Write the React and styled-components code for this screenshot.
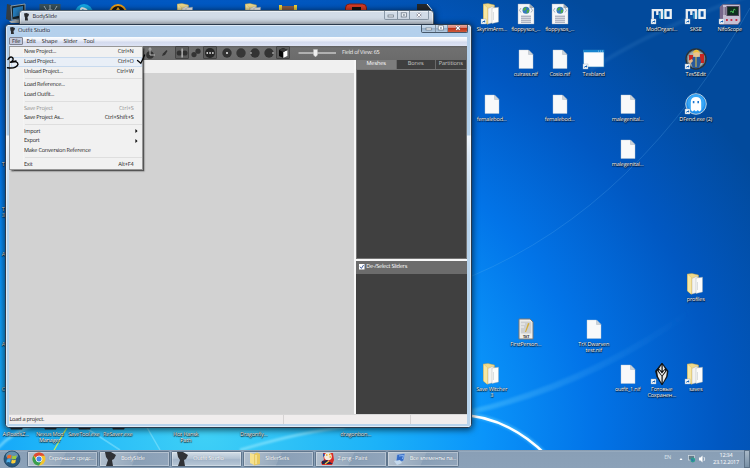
import React from "react";
import styled, { createGlobalStyle, css } from "styled-components";

const Global = createGlobalStyle`
  * { box-sizing: border-box; }
  body { margin: 0; overflow: hidden; }
  body, button { font-family: "Open Sans", "Noto Sans", sans-serif; font-size: 5.6px; letter-spacing: -0.25px; text-rendering: geometricPrecision; }
`;

const Screen = styled.div`
  position: relative;
  width: 750px;
  height: 468px;
  overflow: hidden;
  display: flex;
  flex-direction: column;
  color: #1c1c1c;
  line-height: 1;
  background: radial-gradient(ellipse 635px 535px at 205px 435px, #3fd0f6 0%, #1cb2f8 27%, #0a94fa 44%, #0274e8 61%, #0158c2 81%, #024a9c 100%);
`;
const Wallpaper = styled.svg`
  position: absolute;
  inset: 0;
`;
const IconGrid = styled.div`
  position: relative;
  flex: 1;
  min-height: 0;
  margin-left: -1.3px;
  display: grid;
  grid-template-columns: repeat(22, 34px);
  grid-template-rows: repeat(10, 45px);
`;
const Shortcut = styled.div`
  grid-column: ${(p) => p.$col + 1};
  grid-row: ${(p) => p.$row + 1};
  display: flex;
  flex-direction: column;
  align-items: ${(p) => (p.$edge ? "flex-start" : "center")};
  padding-top: 2.5px;
  padding-left: ${(p) => (p.$edge ? 3 : 0)}px;
  svg { display: block; flex: none; overflow: visible; }
`;
const Label = styled.div`
  margin-top: 1.2px;
  color: #fff;
  font-size: 5.5px;
  line-height: 6.6px;
  text-align: center;
  white-space: pre;
  letter-spacing: -0.17px;
  text-shadow: 0 0.4px 1px #000, 0.4px 0.6px 1px #000;
`;

/* windows */
const Window = styled.section`
  position: absolute;
  left: ${(p) => p.$x}px;
  top: ${(p) => p.$y}px;
  width: ${(p) => p.$w}px;
  height: ${(p) => p.$h}px;
  display: flex;
  flex-direction: column;
  padding: 0 3.5px 3.5px;
  border: 1px solid ${(p) => (p.$active ? "#2b3a4c" : "#52616f")};
  border-radius: 3.5px;
  background: ${(p) => (p.$active
    ? "linear-gradient(#b4d0ec 0, #b0cfeb 110px, #eef5fb 111px, #dce9f6 130px, #b7d3ec 200px)"
    : "linear-gradient(#d2dce8, #c6d3e2)")};
  box-shadow: inset 0 0 0 0.7px rgba(255, 255, 255, 0.75), 0 1px 6px 1px rgba(0, 0, 0, 0.6);
`;
const TitleBar = styled.header`
  flex: none;
  height: 12px;
  display: flex;
  align-items: flex-start;
  padding-left: ${(p) => p.$inset}px;
`;
const Title = styled.span`
  flex: 1;
  margin-left: 3.6px;
  padding-top: 3.2px;
  letter-spacing: -0.1px;
  color: #18202c;
  text-shadow: 0 0 3px #fff;
`;
const Mark = styled.svg`
  flex: none;
  width: 5px;
  height: 7.5px;
  margin-top: 2.1px;
`;
const Controls = styled.div`
  display: flex;
  height: 8.6px;
  margin-right: ${(p) => p.$right}px;
  border: 0.7px solid ${(p) => (p.$active ? "#47596b" : "#8b9aa9")};
  border-top: 0;
  border-radius: 0 0 2px 2px;
  overflow: hidden;
`;
const Control = styled.button`
  width: ${(p) => p.$w}px;
  padding: 0;
  border: 0;
  border-left: ${(p) => (p.$first ? 0 : "0.7px solid #8494a4")};
  display: grid;
  place-items: center;
  background: ${(p) => (p.$close
    ? "linear-gradient(#e7a89c, #d77967 45%, #bb3319 50%, #cf5a3c)"
    : p.$active ? "linear-gradient(#cbddee, #bacee2 45%, #98b1ca 50%, #b3cbe2)" : "transparent")};
`;
const Client = styled.div`
  flex: 1;
  min-height: 0;
  display: flex;
  flex-direction: column;
  background: #f0f0f0;
`;
const MenuBar = styled.nav`
  flex: none;
  height: 9px;
  display: flex;
  align-items: center;
  background: linear-gradient(#fdfeff, #e7ebf6 45%, #d3daee 55%, #dde3f4);
`;
const MenuTitle = styled.span`
  height: 7.6px;
  line-height: 6.4px;
  padding: 0 2px;
  letter-spacing: -0.12px;
  border: 1px solid ${(p) => (p.$open ? "#7e8290" : "transparent")};
  border-radius: 1px;
  background: ${(p) => (p.$open ? "#c4c9db" : "transparent")};
`;
const Toolbar = styled.div`
  flex: none;
  height: 14px;
  display: flex;
  align-items: center;
  padding-left: 133.5px;
  background: linear-gradient(#5e5e5e, #707070 2px, #6b6b6b);
  color: #fff;
`;
const Tool = styled.span`
  width: 14px;
  height: 13px;
  display: grid;
  place-items: center;
  margin-right: ${(p) => p.$gap || 0}px;
  ${(p) => p.$on && css`
    border: 0.8px solid #444;
    background: #5c5c5c;
    border-radius: 1px;
  `}
`;
const Slider = styled.svg`
  margin-left: 8px;
`;
const FieldOfView = styled.span`
  margin-left: 5.5px;
  letter-spacing: -0.26px;
  color: #f0f0f0;
`;
const Workspace = styled.div`
  flex: 1;
  min-height: 0;
  display: grid;
  grid-template-columns: 1fr 110.6px;
  column-gap: 1.5px;
  background: #f8f8f8;
`;
const Viewport = styled.div`
  margin: 13px 0.6px 0 0;
  background: #d2d2d2;
  box-shadow: 0 -13px 0 #f0f0f0;
`;
const SidePanels = styled.div`
  display: flex;
  flex-direction: column;
`;
const Tabs = styled.div`
  display: grid;
  grid-template-columns: 39.5px 38px 1fr;
  column-gap: 0.8px;
  height: 9px;
  padding-right: 1px;
  background: #6a6a6a;
`;
const Tab = styled.span`
  display: grid;
  place-items: center;
  letter-spacing: -0.1px;
  color: ${(p) => (p.$on ? "#fff" : "#c9c9c9")};
  background: ${(p) => (p.$on ? "#7d7d7d" : "#3f3f3f")};
`;
const MeshList = styled.div`
  height: 190.5px;
  border: 1px solid #747474;
  background: #404040;
`;
const SliderHeader = styled.label`
  height: 13px;
  margin-top: 1.7px;
  display: flex;
  align-items: center;
  gap: 1.5px;
  padding-left: 2.8px;
  background: #6c6c6c;
  color: #fff;
`;
const SliderList = styled.div`
  flex: 1;
  background: #404040;
`;
const StatusBar = styled.footer`
  flex: none;
  height: 10px;
  display: grid;
  grid-template-columns: 275px 127px 1fr;
  align-items: center;
  background: #f0eded;
  border-top: 0.6px solid #d7d7d7;
`;
const StatusCell = styled.span`
  height: 9px;
  line-height: 9.5px;
  padding-left: 0.4px;
  border-right: 0.7px solid #d6d3d3;
  &:last-child { border-right: 0; }
`;

/* open File menu */
const Menu = styled.div`
  position: absolute;
  left: 9px;
  top: 45.5px;
  width: 134.3px;
  height: 124.2px;
  padding: 0.8px;
  background: linear-gradient(90deg, #f1f1f1 13px, #e2e3e3 13px, #fff 13.8px, #f1f1f1 14.5px);
  border: 0.8px solid #979797;
  box-shadow: 1.5px 1.5px 1.5px rgba(0, 0, 0, 0.6);
`;
const MenuItem = styled.div`
  height: 9.87px;
  display: flex;
  align-items: center;
  justify-content: space-between;
  padding: 0 7.8px 0 13.2px;
  border-radius: 1px;
  color: ${(p) => (p.$disabled ? "#929292" : "#1a1a1a")};
  ${(p) => p.$hover && css`
    background: #e9eff7;
    box-shadow: inset 0 0 0 0.7px #bdd3ec;
  `}
`;
const Shortkey = styled.span`
  letter-spacing: -0.12px;
`;
const Separator = styled.div`
  height: 3.4px;
  margin-left: 14px;
  padding-top: 1.3px;
  &::before { content: ""; display: block; height: 0.8px; background: #dedede; }
`;
const Submenu = styled.svg`
  margin-right: -4.6px;
`;
const Scribble = styled.svg`
  position: absolute;
  left: 0;
  top: 46px;
  pointer-events: none;
`;

/* taskbar */
const Taskbar = styled.footer`
  position: relative;
  flex: none;
  height: 18px;
  display: flex;
  align-items: stretch;
  padding-left: 3px;
  background: linear-gradient(#71879f 0, #a2b4c6 1px, #899fb6 2px, #8ba1b8);
  color: #fff;
`;
const Start = styled.svg`
  flex: none;
  width: 18px;
  height: 18px;
  margin-right: 5.5px;
`;
const Task = styled.div`
  width: 71.4px;
  margin: 0.7px 0.8px 0.6px 0;
  padding-left: 4.4px;
  display: flex;
  align-items: center;
  gap: 2.8px;
  border: 0.7px solid #60768d;
  border-radius: 1.4px;
  white-space: nowrap;
  box-shadow: inset 0 0 0 0.7px rgba(255, 255, 255, 0.45);
  background: ${(p) => (p.$active
    ? "linear-gradient(#d2dde7, #b4c4d4 45%, #a4b6ca 55%, #b8c8d7)"
    : "linear-gradient(115deg, #b3c1cf, #96a9bd 50%, #899fb6 51%, #91a5bb)")};
  span { text-shadow: 0 0 1px rgba(40, 60, 80, 0.5); letter-spacing: -0.2px; }
`;
const Tray = styled.div`
  margin-left: auto;
  display: flex;
  align-items: center;
`;
const Language = styled.span`
  margin-right: 7px;
  padding-bottom: 2px;
  color: #dce5ed;
`;
const Clock = styled.span`
  width: 36px;
  margin-left: 2px;
  text-align: center;
  line-height: 7.4px;
`;
const ShowDesktop = styled.span`
  align-self: stretch;
  width: 6px;
  border: 0.7px solid #5d7287;
  background: linear-gradient(#a9b9c8, #7890a6);
`;

const Logo = () => (
  <Mark viewBox="0 0 10 15">
    <path d="M0 1 5 0 10 2 9 6 7 8 8 15 2 15 2 9 1 7Z" fill="#2a2c30" />
  </Mark>
);

const Arrow = () => (
  <g transform="translate(0 16)">
    <rect width="5" height="5" fill="#f5f9fc" stroke="#97a9bc" strokeWidth=".4" />
    <path d="M1 4C1 2.5 2 2 3 2V1L4.4 2.4 3 3.8V3Q2 2.8 1 4" fill="#1763b6" />
  </g>
);

const drawings = {
  file: () => (
    <>
      <path d="M4 2H13.5L18 6.5V20.5H4Z" fill="#f8f9fa" stroke="#bac7d2" strokeWidth=".4" />
      <path d="M13.5 2V6.5H18Z" fill="#cbd3da" stroke="#8d9aa6" strokeWidth=".3" />
    </>
  ),
  folder: () => (
    <>
      <path d="M2.5 1 7 .5 13.5 2V18L6 21 2.5 18Z" fill="#f0da8b" stroke="#c59f3b" strokeWidth=".4" />
      <path d="M7 5.5 12.5 3V19.5L7 21Z" fill="#f3f3f1" stroke="#a8a8a0" strokeWidth=".4" />
      <path d="M11 5 17.5 4.2V19L11 20.5Z" fill="#fcfcfb" stroke="#a3a8a8" strokeWidth=".4" />
      <path d="M12.5 9V17" stroke="#c5c9cc" strokeWidth=".6" />
      <path d="M2.5 1 6.5 4.5V21.5L2.5 18Z" fill="#f7e7a2" stroke="#cfae55" strokeWidth=".3" />
    </>
  ),
  web: () => (
    <>
      <path d="M3 1H14.5L19 5V21H3Z" fill="#f5f6f8" stroke="#9fa9b3" strokeWidth=".4" />
      <path d="M14.5 1V5H19Z" fill="#9ba5b0" />
      <path d="M6 5 4.5 7.3 6 9.5M16 5 17.5 7.3 16 9.5" fill="none" stroke="#8293a5" strokeWidth=".7" />
      <circle cx="11" cy="7.3" r="3.5" fill="#3679bf" />
      <path d="M8 6.5Q9 4 11.5 4L11 6.5 9 8Z M12 7 14.3 6.5 13.5 9.5 11.5 10.5Z" fill="#52ae42" />
      <path d="M6 13.2H16M6 15.2H16M6 17.2H16M6 19.2H16" stroke="#9197aa" strokeWidth="1" />
    </>
  ),
  window: () => (
    <>
      <rect x=".5" y="2" width="20.5" height="17" fill="#fbfcfd" stroke="#1e79bd" strokeWidth=".6" />
      <path d="M.5 2H21V4.3H.5Z" fill="#1684cf" />
      <path d="M15 3.1H16M17 3.1H18M19 3.1H20" stroke="#d9effc" strokeWidth=".6" />
    </>
  ),
  mo: () => (
    <>
      <path d="M1.8 16V7.2H10.8V16M6.3 7V12" fill="none" stroke="#e8edf1" strokeWidth="2.3" />
      <path d="M8.8 10V15.5M13 7V15.5" stroke="#2b9ac6" strokeWidth="1.3" />
      <path d="M14.5 7.2H19.7V14.8H14.5Z" fill="none" stroke="#eff2f4" strokeWidth="2.3" />
    </>
  ),
  scope: () => (
    <>
      <path d="M1 4 4 1.5H21L21.5 18 19 21.5H1Z" fill="#c6bfd2" stroke="#665b76" strokeWidth=".7" />
      <path d="M1 4 4 1.5V18L1 21Z" fill="#78688c" />
      <rect x="8" y="3.5" width="11.5" height="9" fill="#102d20" stroke="#4d4358" strokeWidth="1" />
      <path d="M11 9 13 8 14 10 15 6 16.5 7" fill="none" stroke="#55d75e" strokeWidth=".8" />
      <path d="M7 17H8.8M11.5 17H13.3M16.5 17H18.3" stroke="#c12e47" strokeWidth="2" />
      <path d="M5 4V12M6.5 4V12" stroke="#48375b" strokeWidth=".6" />
    </>
  ),
  vault: () => (
    <>
      <circle cx="11" cy="11" r="10" fill="#73828a" stroke="#2a3339" strokeWidth="1.4" />
      <circle cx="11" cy="11" r="8" fill="#a8b2ac" />
      <path d="M4 7H8V14H4ZM15 6H19V15H15Z" fill="#c92621" />
      <path d="M8 9H15L16 14 14 20H8L6 15Z" fill="#28599b" />
      <path d="M11 9V19" stroke="#e4c33d" strokeWidth="1" />
      <circle cx="11.5" cy="5.8" r="3.2" fill="#eac38d" />
      <path d="M8 5Q9 1 13 2L15 5 12 4Z" fill="#ecc23d" />
      <path d="M3 13 7 11 8 13 5 16Z" fill="#e5b887" />
    </>
  ),
  ghost: () => (
    <>
      <circle cx="11" cy="11" r="10.3" fill="#2191ef" stroke="#b8cfde" strokeWidth="1" />
      <circle cx="11" cy="10" r="8.5" fill="#38a7f7" />
      <path d="M5.8 17V9Q6 4 11 4T16.2 9V17L14.5 18.5 12.7 17 11 18.5 9.3 17 7.5 18.5Z" fill="#fff" />
      <path d="M8.6 8V10.3M13.2 8V10.3" stroke="#1d78cf" strokeWidth="1.6" />
    </>
  ),
  text: () => (
    <>
      <path d="M4 1H15L18 4V21H4Z" fill="#eeeeec" stroke="#777" strokeWidth="1" />
      <rect x="5.8" y="3.5" width="10.5" height="12" fill="#cecfd0" />
      <path d="M10 14 13 5 14.5 5.5 11 14Z" fill="#d5ad38" />
      <path d="M6 6H10M6 9H9" stroke="#f5f5f5" strokeWidth="1" />
      <text x="11" y="19.6" fontSize="3.8" fontWeight="700" textAnchor="middle" fill="#222">TXT</text>
    </>
  ),
  skyrim: () => (
    <>
      <path d="M11 0 17 8 16 14 11 22 6 14 4.5 8Z" fill="#111" stroke="#111" strokeWidth=".8" />
      <path d="M10.5 2V8L8 5.8ZM11.7 2 14 5.8 11.7 8ZM6 7.5 10.5 13V20L7 13.5ZM16 7.5 11.7 13V20L15.2 13.5Z" fill="#e9e9e7" />
      <path d="M8 7.5 11 11.5 14 7.5" fill="none" stroke="#fff" strokeWidth="1.1" />
    </>
  ),
  computer: () => (
    <>
      <path d="M2 1 6 2V18L1 16Z" fill="#333d45" />
      <path d="M6 3 20 1V15L7 17Z" fill="#182730" stroke="#8b9ba5" strokeWidth="1" />
      <path d="M8 5 18 3V12L8 14Z" fill="#277fbf" />
      <path d="M4 18 18 16 20 20H6Z" fill="#bac3c8" />
    </>
  ),
  emblem: () => (
    <>
      <rect x=".5" y="1" width="21" height="20" fill="#38515c" />
      <path d="M11 2V12M5 3 8 8 11 6 15 8 18 3" fill="none" stroke="#a5b5ba" strokeWidth="1" />
    </>
  ),
  skype: () => (
    <>
      <circle cx="11" cy="10" r="9" fill="#14a9e6" />
      <path d="M14 7Q7 3 8 8 15 10 14 13 10 16 7 12" fill="none" stroke="#fff" strokeWidth="2" />
    </>
  ),
  orange: () => (
    <>
      <circle cx="11" cy="10" r="8" fill="#191713" stroke="#ec9e17" strokeWidth="2" />
      <path d="M11 4 15 10H7Z" fill="#f2a921" />
    </>
  ),
  scroll: () => (
    <>
      <path d="M4 3H18V15H4Z" fill="#8c5e45" />
      <path d="M2 2H5V16H2ZM17 2H20V16H17Z" fill="#efd338" />
    </>
  ),
  red: () => (
    <>
      <rect x=".5" y="1" width="21" height="18" rx="4" fill="#d93c24" stroke="#7c1d16" />
      <path d="M7 4H16V9H11V14H7Z" fill="#171413" />
    </>
  ),
  black: () => (
    <>
      <path d="M4 1H15L20 11H4Z" fill="#24282c" />
      <path d="M14 1 19 7" stroke="#fff" />
    </>
  ),
  base: () => <path d="M4 17H19L17 21.5H6Z" fill="#25313c" />,
  none: () => null,
};

const shortcuts = [
  [0, 0, "computer", ""], [1, 0, "emblem", ""], [2, 0, "skype", ""], [3, 0, "orange", ""],
  [5, 0, "folder", ""], [7, 0, "folder", ""], [8, 0, "scroll", ""], [10, 0, "red", ""], [12, 0, "black", ""],
  [14, 0, "folder", "SkyrimArm...", 1], [15, 0, "web", "floppysos_..."], [16, 0, "web", "floppysos_..."],
  [19, 0, "mo", "ModOrgani...", 1], [20, 0, "mo", "SKSE", 1], [21, 0, "scope", "NifoScope", 1],
  [15, 1, "file", "cuirass.nif"], [16, 1, "file", "Cosio.nif"], [17, 1, "window", "Texbland", 1], [20, 1, "vault", "Tes5Edit", 1],
  [14, 2, "file", "femalebod..."], [16, 2, "file", "femalebod..."], [18, 2, "file", "malegenital..."], [20, 2, "ghost", "DFend.exe (2)", 1],
  [18, 3, "file", "malegenital..."], [20, 6, "folder", "profiles"],
  [15, 7, "text", "FirstPerson..."], [17, 7, "file", "TrX Dwarven\ntest.nif"],
  [14, 8, "folder", "Save Witcher\n3"], [18, 8, "file", "outfit_1.nif"],
  [19, 8, "skyrim", "Готовые\nСохранен...", 1], [20, 8, "folder", "saves", 1],
  [0, 3, "none", "T", 0, 1], [0, 4, "none", "T\n3", 0, 1], [0, 5, "none", "A", 0, 1],
  [0, 7, "none", "A", 0, 1], [0, 8, "none", "C", 0, 1],
  [0, 9, "base", "AiRoadsZ..."], [1, 9, "base", "Nexus Mod\nManager"], [2, 9, "base", "SaveTool.exe"],
  [3, 9, "base", "ReSaver.exe"], [5, 9, "none", "Hot Hansk\nPath"], [7, 9, "none", "Dragonfly..."], [10, 9, "none", "dragonbon..."],
];

const menu = [
  ["New Project...", "Ctrl+N"], ["Load Project..", "Ctrl+O", "hover"], ["Unload Project...", "Ctrl+W"], null,
  ["Load Reference..."], ["Load Outfit..."], null,
  ["Save Project", "Ctrl+S", "disabled"], ["Save Project As...", "Ctrl+Shift+S"], null,
  ["Import", null, "sub"], ["Export", null, "sub"], ["Make Conversion Reference"], null,
  ["Exit", "Alt+F4"],
];

const toolArt = {
  axes: <><circle cx="6" cy="8" r="3.8" fill="#333" /><path d="M6 1V8H11" fill="none" stroke="#b8b8b8" strokeWidth="1" /><path d="M4 2.5 6 0 8 2.5Z" fill="#aaa" /></>,
  brush: <path d="M4 9 5 6.5 8.5 3 9.5 4 7 8Z" fill="#333" />,
  mirror: <><circle cx="3.3" cy="6" r="2.6" fill="#303030" /><circle cx="8.9" cy="6" r="2.6" fill="#303030" /><path d="M6.1 1.5V10.5" stroke="#ddd" strokeWidth="1" /></>,
  linked: <><circle cx="4" cy="7.6" r="2.6" fill="#333" /><circle cx="8" cy="4.2" r="2.6" fill="#333" /></>,
  dots: <><circle cx="6" cy="6" r="5" fill="#272727" /><path d="M2.5 6H4M5.3 6H6.8M8.1 6H9.6" stroke="#fff" strokeWidth="1.3" /></>,
  dot: <><circle cx="6" cy="6" r="4.7" fill="#333" /><circle cx="6" cy="6" r="1" fill="#eee" /></>,
  disc: <circle cx="6" cy="6" r="4.7" fill="#363636" />,
  left: <><circle cx="6" cy="6" r="4.7" fill="#333" /><circle cx="2" cy="6" r=".8" fill="#ddd" /></>,
  right: <><circle cx="6" cy="6" r="4.7" fill="#333" /><circle cx="10" cy="6" r=".8" fill="#ddd" /></>,
  cube: <><path d="M2 3 6 1 10.5 3V9L6.3 11 2 9Z" fill="#080808" /><path d="M6.3 5 10.5 3V9L6.3 11Z" fill="#fff" /><path d="M2 3 6 1 10.5 3 6.3 5Z" fill="#383838" /></>,
};
const tools = [["axes"], ["brush", 0, 4], ["mirror", 1], ["linked"], ["dots", 1, 3], ["dot"], ["disc"], ["left"], ["right"], ["cube", 1]];

const taskArt = {
  chrome: (
    <>
      <circle cx="7" cy="7" r="6.5" fill="#f2c52e" />
      <path d="M7 7 1.4 3.7A6.5 6.5 0 0 1 12.6 3.7H7Z" fill="#dd4936" />
      <path d="M1.4 3.7A6.5 6.5 0 0 0 7 13.5L9.8 8.6 4.2 8.6Z" fill="#389e50" />
      <circle cx="7" cy="7" r="3" fill="#4a87e8" stroke="#fff" strokeWidth=".8" />
    </>
  ),
  body: <path d="M1 0 7 0 12 3 10 7 8 8 9 14H2L4 8 2 5Z" fill="#303236" />,
  folder: <><path d="M2 1 6 2V13L2 11Z" fill="#f6e18d" /><path d="M6 2 9 0.5 12 2V12L6 13.5Z" fill="#e8ca61" /><path d="M8 3V12" stroke="#fff3bd" /></>,
  paint: (
    <>
      <path d="M2 1H12L13 8 11 13H1L0 10 3 8Z" fill="#d92d27" />
      <circle cx="7" cy="4.5" r="3.8" fill="#f4eadd" />
      <path d="M5 3H6.5M8 2.5H9.5M8.5 5H10" stroke="#e7ae18" strokeWidth="1.4" />
      <path d="M1 9 6 8 12 12H1Z" fill="#25274d" />
      <path d="M4 12 8 9" stroke="#f1c944" strokeWidth="1.2" />
      <path d="M2 1 4 3 2 5Z" fill="#1c4fb0" />
    </>
  ),
  panel: (
    <>
      <path d="M4 2.5 12 1.5 10.5 9 3 10Z" fill="#336bc6" stroke="#b5cbe4" strokeWidth=".5" />
      <path d="M1 9 7 8 9 11 4 13Z" fill="#c4d9ed" />
      <path d="M6 4 10.5 3.5 9.5 7" fill="none" stroke="#8db8f2" strokeWidth="1" />
    </>
  ),
};
const tasks = [
  ["chrome", "Скриншот средс..."], ["body", "BodySlide"], ["body", "Outfit Studio", 1],
  ["folder", "SliderSets"], ["paint", "2.png - Paint"], ["panel", "Все элементы па..."],
];

function WindowControls({ active, right, widths }) {
  const ink = { fill: active ? "#fff" : "#e8edf2", stroke: "#65717e", strokeWidth: 0.7 };
  return (
    <Controls $active={active} $right={right}>
      <Control $w={widths[0]} $active={active} $first>
        <svg width="8" height="6"><rect x="1" y="3" width="5.5" height="2" {...ink} /></svg>
      </Control>
      <Control $w={widths[1]} $active={active}>
        <svg width="8" height="6"><rect x="1.2" y=".8" width="5.2" height="4.2" {...ink} /><path d="M3 3H4.8" stroke="#526070" /></svg>
      </Control>
      <Control $w={widths[2]} $close={active}>
        <svg width="8" height="6"><path d="M2.2 1.2 5.8 4.8M5.8 1.2 2.2 4.8" stroke="#667" strokeWidth="2.1" /><path d="M2.2 1.2 5.8 4.8M5.8 1.2 2.2 4.8" stroke="#fff" strokeWidth="1.2" /></svg>
      </Control>
    </Controls>
  );
}

function Desktop() {
  return (
    <IconGrid>
      {shortcuts.map(([col, row, art, label, linked, edge], i) => (
        <Shortcut key={i} $col={col} $row={row} $edge={edge}>
          <svg width="22" height="22" viewBox="0 0 22 22">
            {drawings[art]()}
            {linked ? <Arrow /> : null}
          </svg>
          <Label>{label}</Label>
        </Shortcut>
      ))}
    </IconGrid>
  );
}

function OutfitStudio() {
  return (
    <Window $x={4.5} $y={23.5} $w={467} $h={404.5} $active>
      <TitleBar $inset={0.5}>
        <Logo />
        <Title>Outfit Studio</Title>
        <WindowControls active right={-1.3} widths={[12.6, 11.8, 20.6]} />
      </TitleBar>
      <Client>
        <MenuBar>
          {["File", "Edit", "Shape", "Slider", "Tool"].map((name, i) => <MenuTitle key={name} $open={i === 0}>{name}</MenuTitle>)}
        </MenuBar>
        <Toolbar>
          {tools.map(([name, on, gap]) => (
            <Tool key={name} $on={on} $gap={gap}><svg width="12" height="12">{toolArt[name]}</svg></Tool>
          ))}
          <Slider width="39" height="10">
            <path d="M.5 5H38" stroke="#f3f3f3" strokeWidth="1" />
            <path d="M15.5 1.5H19.5V7L17.5 9 15.5 7Z" fill="#eee" stroke="#bbb" strokeWidth=".4" />
          </Slider>
          <FieldOfView>Field of View: 65</FieldOfView>
        </Toolbar>
        <Workspace>
          <Viewport />
          <SidePanels>
            <Tabs><Tab $on>Meshes</Tab><Tab>Bones</Tab><Tab>Partitions</Tab></Tabs>
            <MeshList />
            <SliderHeader>
              <svg width="5.5" height="5.5"><rect width="5.5" height="5.5" fill="#fff" /><path d="M1 2.7 2.4 4.4 4.6 1" fill="none" stroke="#2b4d96" strokeWidth=".9" /></svg>
              De-/Select Sliders
            </SliderHeader>
            <SliderList />
          </SidePanels>
        </Workspace>
        <StatusBar>
          <StatusCell>Load a project.</StatusCell><StatusCell /><StatusCell />
        </StatusBar>
      </Client>
    </Window>
  );
}

export default function App() {
  return (
    <Screen>
      <Global />
      <Wallpaper width="750" height="468">
        <defs>
          <linearGradient id="beam" x1="0" x2="1">
            <stop offset="0" stopColor="#75d7ff" stopOpacity=".35" />
            <stop offset="1" stopColor="#4aa8f4" stopOpacity="0" />
          </linearGradient>
          <filter id="soft"><feGaussianBlur stdDeviation="1.2" /></filter>
        </defs>
        <path d="M472 409Q590 380 690 308L692 314Q590 388 472 414Z" fill="url(#beam)" filter="url(#soft)" />
        <path d="M472 276Q640 205 750 8" fill="none" stroke="#6dbbf2" strokeWidth=".7" opacity=".3" />
        <path d="M590 70Q650 30 750 -5" fill="none" stroke="#5fa2d8" strokeWidth="4" opacity=".14" filter="url(#soft)" />
        <path d="M455 414Q507 415 546 455" fill="none" stroke="#65cfff" strokeWidth="5" opacity=".5" filter="url(#soft)" />
        <path d="M455 414.5Q506 415 546 455" fill="none" stroke="#fff" strokeWidth="2.6" />
        <path d="M-2 448Q10 434 34 425M240 450Q300 432 345 427" fill="none" stroke="#a7efff" strokeWidth="2.5" opacity=".6" filter="url(#soft)" />
        <path d="M53 452 69 424" stroke="#c8ef53" strokeWidth="1.2" />
        <path d="M80 424 120 450M145 424 160 450" stroke="#a9efff" strokeWidth="1.5" opacity=".4" />
      </Wallpaper>
      <Desktop />
      <Window $x={18.8} $y={10} $w={415.2} $h={120}>
        <TitleBar $inset={0.5}>
          <Logo />
          <Title>BodySlide</Title>
          <WindowControls right={0.8} widths={[12, 11.7, 18.6]} />
        </TitleBar>
      </Window>
      <OutfitStudio />
      <Menu>
        {menu.map((item, i) => item
          ? (
            <MenuItem key={i} $hover={item[2] === "hover"} $disabled={item[2] === "disabled"}>
              <span>{item[0]}</span>
              {item[2] === "sub"
                ? <Submenu width="3" height="4"><path d="M.4 0 2.6 2 .4 4Z" fill="#111" /></Submenu>
                : <Shortkey>{item[1]}</Shortkey>}
            </MenuItem>
          )
          : <Separator key={i} />)}
      </Menu>
      <Scribble width="150" height="26">
        <path d="M8 13.5Q10 10 12.5 11.5 14.5 14 10.5 16.2 18 14.5 18 18.5 16 23 7.5 21.8M10.5 16.2 16 15" fill="none" stroke="#050505" strokeWidth="1.4" strokeLinecap="round" />
        <path d="M137.5 14.5 140.8 17.3Q142.5 14 144.6 9" fill="none" stroke="#050505" strokeWidth="1.3" strokeLinecap="round" />
      </Scribble>
      <Taskbar>
        <Start viewBox="0 0 18 18">
          <circle cx="9" cy="9" r="8" fill="#27587e" stroke="#193f5c" strokeWidth=".7" />
          <ellipse cx="9" cy="5.5" rx="6" ry="4" fill="#8db8d0" opacity=".6" />
          <path d="M4.5 5.5Q6.5 4 8.5 5.2L8 8.5Q6 7.6 4 8.7Z" fill="#ef6a28" />
          <path d="M9.4 5.5Q11.5 6.7 13.7 5.3L13 8.7Q11 9.8 8.9 8.7Z" fill="#9dcb37" />
          <path d="M3.8 9.5Q6 8.4 7.8 9.4L7.2 12.7Q5.4 11.5 3.3 12.8Z" fill="#4baee9" />
          <path d="M8.8 9.6Q10.8 10.8 12.9 9.6L12.3 12.8Q10 14.2 8.1 12.9Z" fill="#fbcf3b" />
        </Start>
        {tasks.map(([art, name, active]) => (
          <Task key={name} $active={active}><svg width="14" height="14">{taskArt[art]}</svg><span>{name}</span></Task>
        ))}
        <Tray>
          <Language>EN</Language>
          <svg width="28" height="10">
            <path d="M1.5 6 3 4 4.5 6Z" fill="#fff" />
            <rect x="10.5" y="1.5" width="6" height="4.5" fill="#657c8b" stroke="#e3e9ed" strokeWidth=".6" />
            <circle cx="14.8" cy="6" r="2.4" fill="#2d9a91" /><path d="M13.5 5 15 7" stroke="#3260bd" />
            <path d="M21 3.5H22.5L24.5 1.5V8.5L22.5 6.5H21Z" fill="#fff" /><path d="M26 3Q27.5 5 26 7" fill="none" stroke="#fff" strokeWidth=".7" />
          </svg>
          <Clock>12:34<br />23.12.2017</Clock>
          <ShowDesktop />
        </Tray>
      </Taskbar>
    </Screen>
  );
}
